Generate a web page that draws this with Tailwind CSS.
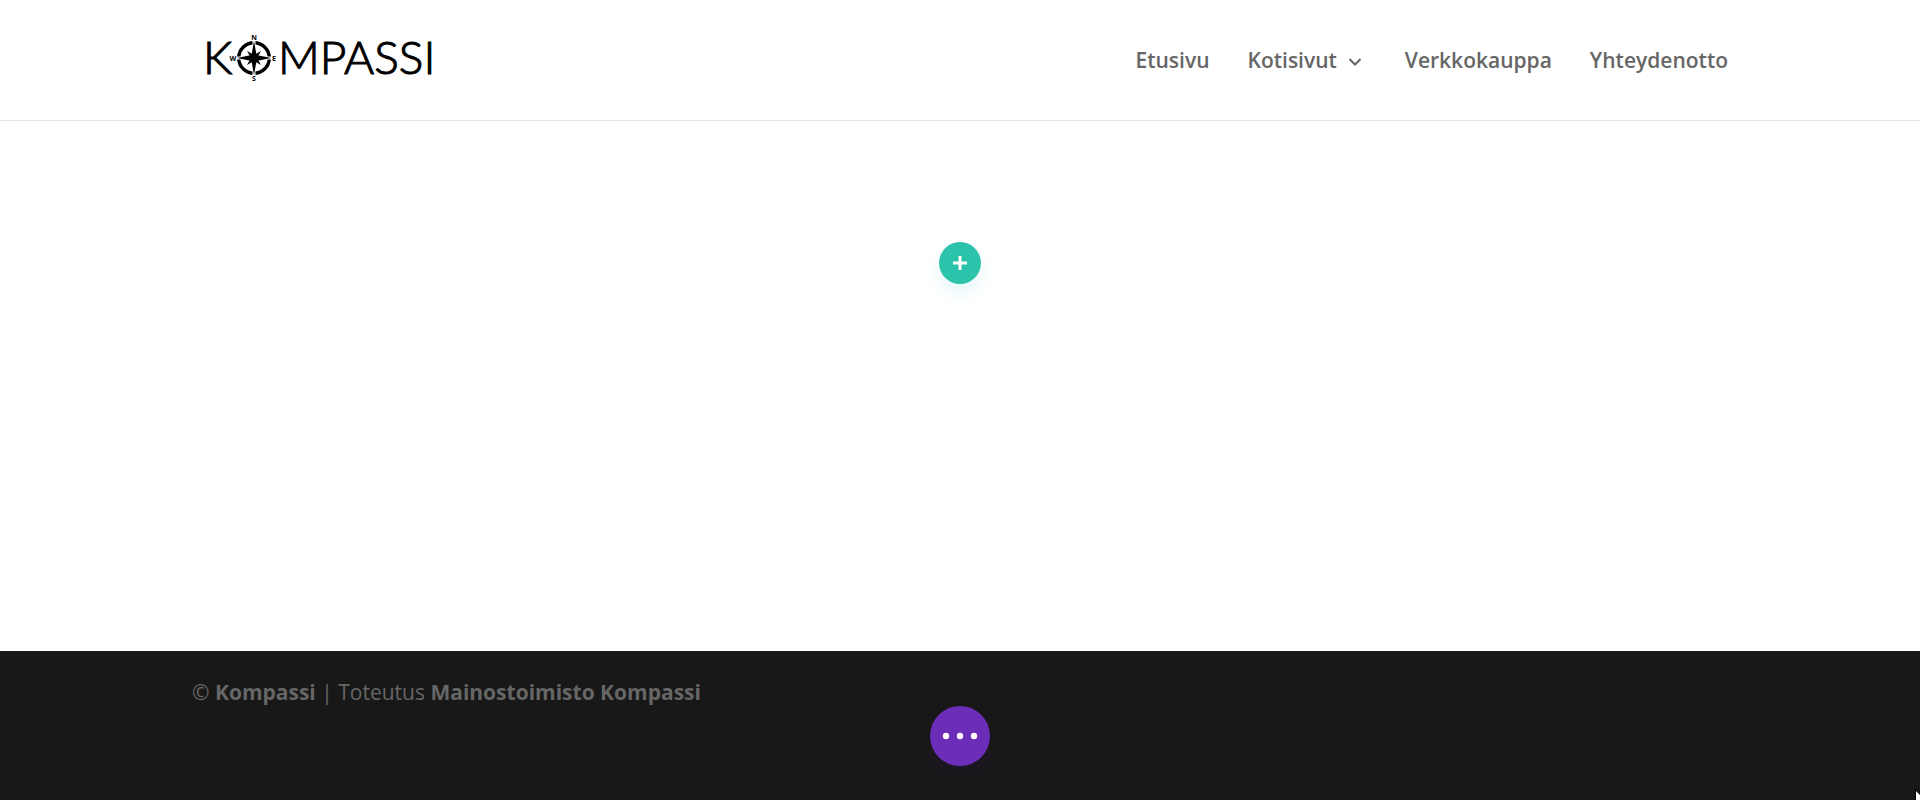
<!DOCTYPE html>
<html lang="fi">

<head>
    <meta charset="UTF-8">
    <meta name="viewport" content="width=device-width, initial-scale=1.0">
    <title>Kompassi</title>
    <script src="https://cdn.jsdelivr.net/npm/@tailwindcss/browser@4"></script>
</head>

<body class="flex min-h-screen flex-col overflow-x-hidden bg-white font-['Open_Sans',sans-serif] text-[21px] text-[#666]">
    <!-- Header -->
    <header class="border-b border-[#e4e4e4]">
        <div class="mx-auto flex h-30 w-4/5 items-center justify-between">
            <a href="#" aria-label="Kompassi" class="ml-3">
                <svg class="h-15 w-60" viewBox="0 0 240 60" fill="#000">
                    <g font-family="Lato, sans-serif" font-size="46" font-weight="300" stroke="#000" stroke-width="1.1">
                        <text x="-1" y="44">K</text>
                        <text x="74" y="44">MPASSI</text>
                    </g>
                    <!-- Compass -->
                    <g transform="translate(50 28)">
                        <circle r="15.3" fill="none" stroke="#000" stroke-width="3.4" />
                        <path d="M0-19V19M-19 0H19" stroke="#fff" stroke-width="3" />
                        <path d="M0-17L2.5-3L17 0L2.5 3L0 17L-2.5 3L-17 0L-2.5-3Z" />
                        <path d="M-7-7L0-3L7-7L3 0L7 7L0 3L-7 7L-3 0Z" />
                        <g font-family="Open Sans, sans-serif" font-size="7" font-weight="700" text-anchor="middle">
                            <text x="0" y="-18">N</text>
                            <text x="20" y="3">E</text>
                            <text x="0" y="23">S</text>
                            <text x="-21" y="3">W</text>
                        </g>
                    </g>
                </svg>
            </a>
            <nav class="flex items-center gap-[38px] pt-0.5 font-semibold">
                <a href="#">Etusivu</a>
                <a href="#" class="flex items-center gap-3">
                    Kotisivut
                    <svg class="mt-0.5 mr-1.5 h-3 w-3" viewBox="0 0 12 12" fill="none" stroke="currentColor" stroke-width="2">
                        <path d="M0.5 3L6 8.5L11.5 3" />
                    </svg>
                </a>
                <a href="#">Verkkokauppa</a>
                <a href="#">Yhteydenotto</a>
            </nav>
        </div>
    </header>

    <!-- Empty page area -->
    <main class="flex flex-1 justify-center pt-[121px]">
        <button type="button" aria-label="Add"
            class="flex size-[42px] items-center justify-center rounded-full bg-[#2bc4aa] shadow-[0_8px_16px_rgba(43,180,210,0.12)]">
            <svg class="size-4" viewBox="0 0 16 16" stroke="#fff" stroke-width="3">
                <path d="M8 1V15M1 8H15" />
            </svg>
        </button>
    </main>

    <!-- Footer -->
    <footer class="h-[149px] bg-[#181818]">
        <div class="mx-auto w-4/5 pt-6 leading-[34px]">
            <p>© <a href="#" class="font-bold">Kompassi</a> | Toteutus <a href="#" class="font-bold">Mainostoimisto Kompassi</a></p>
        </div>
    </footer>

    <!-- Floating builder menu -->
    <button type="button" aria-label="Menu"
        class="fixed bottom-[34px] left-1/2 flex size-15 -translate-x-1/2 items-center justify-center rounded-full bg-[#6c2eb9] shadow-[0_8px_16px_rgba(60,20,110,0.15)]">
        <svg class="h-2 w-9" viewBox="0 0 36 8" fill="#fff">
            <circle cx="4" cy="4" r="3.2" />
            <circle cx="18" cy="4" r="3.2" />
            <circle cx="32" cy="4" r="3.2" />
        </svg>
    </button>

    <!-- Pointer at the window corner -->
    <svg class="fixed right-0 bottom-0 h-[11px] w-[5px]" viewBox="0 0 5 11">
        <path d="M0 0L5 5V11H0Z" />
        <path d="M1 2L5 6V11H1Z" fill="#fff" />
    </svg>
</body>

</html>
